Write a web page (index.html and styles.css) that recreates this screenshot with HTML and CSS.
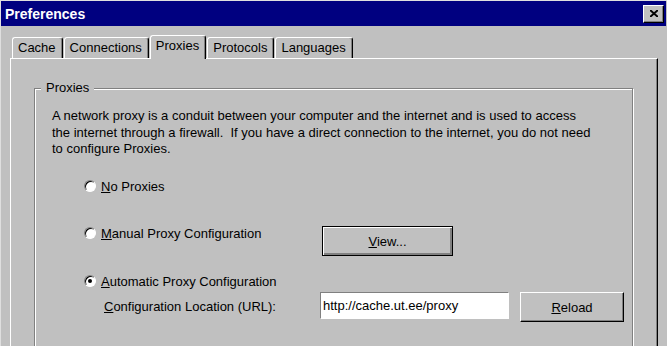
FILE: index.html
```html
<!DOCTYPE html>
<html lang="en">

<head>
    <meta charset="UTF-8">
    <meta name="viewport" content="width=device-width, initial-scale=1.0">
    <title>Preferences</title>
    <link rel="stylesheet" href="styles.css">
</head>

<body>
    <div class="window">
        <!-- Barra de título -->
        <div class="titlebar">
            <span class="title">Preferences</span>
            <button class="close" aria-label="Close">
                <svg width="8" height="7" viewBox="0 0 8 7"><path d="M0 0L8 7M8 0L0 7" stroke="#000" stroke-width="2"/></svg>
            </button>
        </div>

        <!-- Abas -->
        <div class="tabs">
            <div class="tab">Cache</div>
            <div class="tab">Connections</div>
            <div class="tab active">Proxies</div>
            <div class="tab">Protocols</div>
            <div class="tab">Languages</div>
        </div>

        <div class="panel">
            <div class="group">
                <div class="legend">Proxies</div>
                <p class="intro">A network proxy is a conduit between your computer and the internet and is used to access<br>the internet through a firewall.&nbsp; If you have a direct connection to the internet, you do not need<br>to configure Proxies.</p>

                <div class="row row-none">
                    <label class="choice"><span class="radio"></span><span><u>N</u>o Proxies</span></label>
                </div>

                <div class="row row-manual">
                    <label class="choice"><span class="radio"></span><span><u>M</u>anual Proxy Configuration</span></label>
                    <button class="btn btn-default btn-view"><u>V</u>iew...</button>
                </div>

                <div class="row row-auto">
                    <label class="choice"><span class="radio checked"></span><span><u>A</u>utomatic Proxy Configuration</span></label>
                </div>

                <div class="row row-url">
                    <span class="field-label"><u>C</u>onfiguration Location (URL):</span>
                    <input class="url" type="text" value="http://cache.ut.ee/proxy">
                    <button class="btn btn-reload"><u>R</u>eload</button>
                </div>
            </div>
        </div>
    </div>
</body>

</html>
```

FILE: styles.css
```css
body {
    margin: 0;
    background-color: #c0c0c0;
    font-family: "Liberation Sans", Arial, sans-serif;
    font-size: 13px;
    color: #000;
}

.window {
    height: 346px;
    box-sizing: border-box;
    border-top: 1px solid #dfdfdf;
    border-left: 1px solid #dfdfdf;
    padding-right: 1px;
    overflow: hidden;
}

.titlebar {
    height: 25px;
    background-color: #000080;
    display: flex;
    align-items: center;
    justify-content: space-between;
    padding: 0 2px 0 4px;
}

.title {
    color: #fff;
    font-weight: bold;
    font-size: 14px;
}

.close {
    width: 21px;
    height: 18px;
    padding: 0;
    display: flex;
    align-items: center;
    justify-content: center;
    background-color: #c0c0c0;
    border: 1px solid;
    border-color: #fff #000 #000 #fff;
    box-shadow: inset -1px -1px 0 #808080;
}

.tabs {
    display: flex;
    align-items: flex-end;
    height: 24px;
    margin: 8px 0 0 11px;
}

.tab {
    height: 21px;
    box-sizing: border-box;
    line-height: 20px;
    padding: 0 6px 0 5px;
    margin-right: 1px;
    border-top: 1px solid #fff;
    border-left: 1px solid #fff;
    border-right: 1px solid #000;
    border-radius: 3px 3px 0 0;
    box-shadow: inset -1px 0 0 #808080;
}

.tab.active {
    height: 24px;
    margin-bottom: -1px;
    background-color: #c0c0c0;
    position: relative;
    z-index: 1;
}

.panel {
    width: 648px;
    height: 300px;
    box-sizing: border-box;
    margin-left: 9px;
    border-top: 1px solid #fff;
    border-left: 1px solid #fff;
    border-right: 1px solid #000;
    box-shadow: inset -1px 0 0 #808080;
    padding-top: 29px;
}

.group {
    width: 599px;
    height: 280px;
    box-sizing: border-box;
    margin-left: 23px;
    border: 1px solid #808080;
    box-shadow: 1px 1px 0 #fff, inset 1px 1px 0 #fff;
}

.legend {
    width: fit-content;
    line-height: 16px;
    margin: -9px 0 0 6px;
    padding: 0 5px;
    background-color: #c0c0c0;
}

.intro {
    margin: 12px 0 0 17px;
    line-height: 16.5px;
    white-space: nowrap;
}

.row {
    display: flex;
    align-items: flex-start;
    padding-left: 49px;
}

.row-none {
    margin-top: 18.5px;
}

.row-manual {
    margin-top: 27px;
}

.row-auto {
    margin-top: 15px;
}

.row-url {
    margin-top: 1px;
}

.choice {
    width: 238px;
    height: 20px;
    display: flex;
    align-items: center;
    gap: 5px;
    white-space: nowrap;
}

.radio {
    width: 12px;
    height: 12px;
    box-sizing: border-box;
    border-radius: 50%;
    border: 1px solid;
    border-color: #808080 #fff #fff #808080;
    background-color: #fff;
    box-shadow: inset 1px 1px 0 #000;
    display: flex;
    align-items: center;
    justify-content: center;
}

.radio.checked::after {
    content: "";
    width: 4px;
    height: 4px;
    border-radius: 50%;
    background-color: #000;
}

.btn {
    font-family: inherit;
    font-size: 13px;
    color: #000;
    background-color: #c0c0c0;
    padding: 0;
    border: 1px solid;
    border-color: #fff #000 #000 #fff;
    box-shadow: inset -1px -1px 0 #808080;
}

.btn-default {
    border-color: #000;
    box-shadow: inset 1px 1px 0 #fff, inset -1px -1px 0 #808080, inset -2px -2px 0 #808080;
}

.btn-view {
    width: 131px;
    height: 30px;
    margin-top: 3px;
}

.field-label {
    width: 236px;
    box-sizing: border-box;
    padding-left: 20px;
    line-height: 20px;
    margin-top: 5px;
    white-space: nowrap;
}

.url {
    width: 189px;
    height: 27px;
    box-sizing: border-box;
    padding: 0 2px;
    font-family: inherit;
    font-size: 13px;
    background-color: #fff;
    border: 1px solid;
    border-color: #808080 #fff #fff #808080;
    outline: none;
}

.btn-reload {
    width: 104px;
    height: 30px;
    margin-left: 11px;
}
```
